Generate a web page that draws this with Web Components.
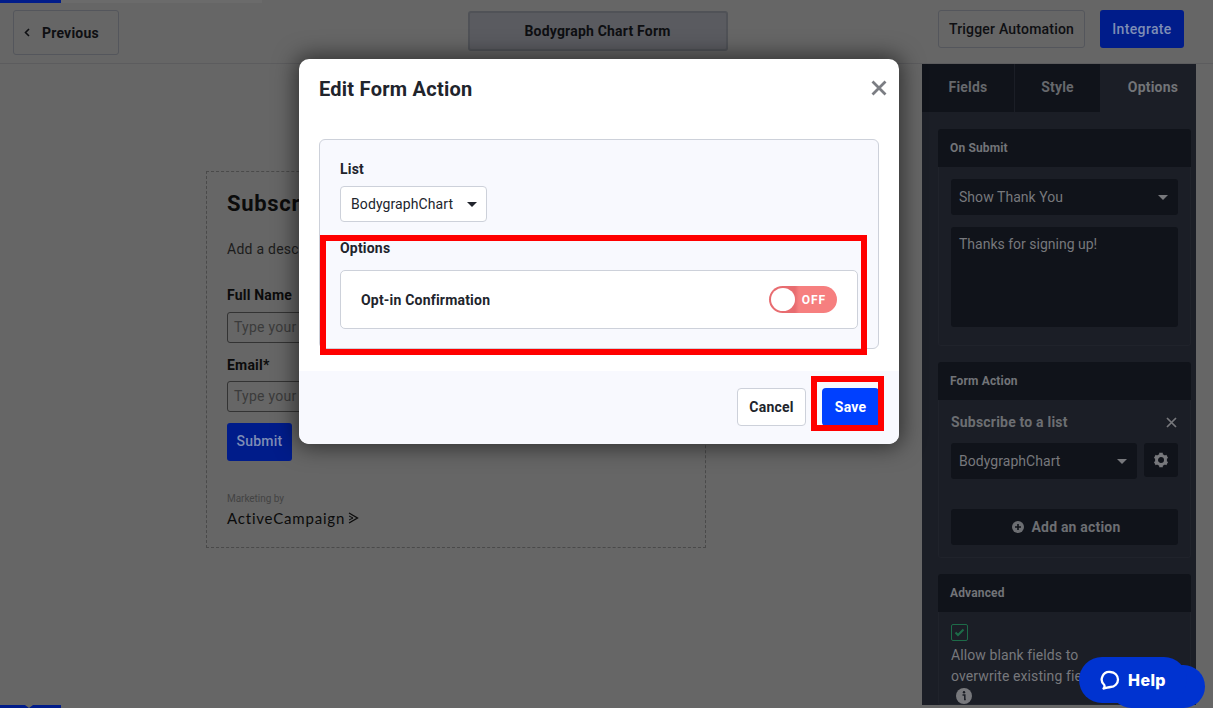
<!DOCTYPE html>
<html><head><meta charset="utf-8">
<style>
html,body{margin:0;height:100%;overflow:hidden;background:#666}
body{font-family:Roboto,"Noto Sans",sans-serif}
</style></head><body>
<app-shell></app-shell>
<script>
const F='Roboto,"Noto Sans","Liberation Sans",sans-serif';
function def(name,css,html){
  customElements.define(name,class extends HTMLElement{
    constructor(){super();const r=this.attachShadow({mode:'open'});r.innerHTML='<style>'+css+'</style>'+html;}
  });
}
const caret=c=>`<svg width="10" height="5" viewBox="0 0 10 5"><path d="M0 0h10L5 5z" fill="${c}"/></svg>`;

def('top-bar',`:host{display:grid;grid-template-columns:1fr auto 1fr;align-items:center;height:63px;border-bottom:1px solid #5c5c5e;box-sizing:content-box;padding:0 29px 0 13px;font:700 14px/20px ${F};color:#0e0f12;letter-spacing:.2px}
.l{display:flex}.r{display:flex;justify-content:flex-end;gap:15px;margin-top:-5px}
.b{display:flex;align-items:center;box-sizing:border-box;height:45px;width:106px;border:1px solid #54565c;border-radius:3px;padding-left:10px;gap:12px;margin-top:2px}
.t{width:260px;height:40px;box-sizing:border-box;border:2px solid #505257;border-radius:3px;background:#5a5b60;display:flex;align-items:center;justify-content:center;margin-left:-2px;margin-top:-2px}
.a{height:38px;box-sizing:border-box;border:1px solid #54565c;border-radius:3px;display:flex;align-items:center;justify-content:center;width:147px;font-weight:500;letter-spacing:.2px}
.i{height:38px;width:84px;box-sizing:border-box;border-radius:3px;background:#001c8a;color:#7e8db5;display:flex;align-items:center;justify-content:center;font-weight:500;letter-spacing:.35px}`,
`<div class="l"><div class="b"><svg width="6" height="9" viewBox="0 0 6 9"><path d="M5 1 1.500 4.500 5 8" fill="none" stroke="#0e0f12" stroke-width="1.600"/></svg><span>Previous</span></div></div>
<div class="t">Bodygraph Chart Form</div>
<div class="r"><div class="a">Trigger Automation</div><div class="i">Integrate</div></div>`);

def('form-preview',`:host{display:block;box-sizing:border-box;width:500px;height:377px;border:1px dashed #4a4a4a;padding:18px 20px 0;color:#0b0b0b}
h2{margin:0;font:700 22px/28px ${F};letter-spacing:.7px}
p{margin:21px 0 0;font:400 14px/20px ${F};color:#1c1c1c;letter-spacing:.25px}
label{display:block;font:700 14px/20px ${F};letter-spacing:.2px}
.f{margin-top:26px}.g{margin-top:12px}
.in{width:300px;height:31px;box-sizing:border-box;border:1px solid #333;border-radius:3px;padding-left:6px;font:400 14px/29px ${F};color:#3b3b3b;letter-spacing:.25px}
.i1{margin-top:7px}.i2{margin-top:6px}
.s{margin-top:11px;width:65px;height:38px;background:#001c8a;border-radius:3px;color:#7e8db5;font:500 14px/37px ${F};text-align:center;letter-spacing:.2px}
.m{margin-top:31px;font:400 10px/14px ${F};color:#434343;letter-spacing:-.05px}
.ac{font:400 15px/20px Lato,${F};color:#0b0b0b;margin-top:2px;display:flex;align-items:center;gap:3px;letter-spacing:.8px}`,
`<h2>Subscribe</h2><p>Add a description here.</p>
<label class="f">Full Name</label><div class="in i1">Type your name</div>
<label class="g">Email*</label><div class="in i2">Type your email</div>
<div class="s">Submit</div><div class="m">Marketing by</div>
<div class="ac"><span>ActiveCampaign</span><svg width="11" height="12" viewBox="0 0 11 12"><path d="M1 1l8.500 5L1 11" fill="none" stroke="#0b0b0b" stroke-width="1.300"/><path d="M1 4l4 2-4 2" fill="none" stroke="#0b0b0b" stroke-width="1"/></svg></div>`);

def('side-panel',`:host{display:block;border:1px solid #20232b;border-top:0;border-radius:3px;background:#1b1e26;margin-bottom:16px}
.h{height:38px;margin:0 -1px;background:#10131a;font:700 12px/38px ${F};color:#727478;padding-left:12px;border-radius:3px 3px 0 0;letter-spacing:.15px}
.c{padding:12px 12px 0}`,`<div class="h"><slot name="h"></slot></div><div class="c"><slot></slot></div>`);

def('side-select',`:host{display:flex;align-items:center;justify-content:space-between;box-sizing:border-box;height:36px;background:#10131a;border-radius:3px;padding:0 10px 0 8px;font:400 14px/20px ${F};color:#77787c;letter-spacing:.05px}`,
`<slot></slot>${caret('#77787c')}`);

def('side-bar',`:host{display:block;width:274px;height:641px;background:#1b1e26;overflow:hidden;font:400 14px/21px ${F};color:#77787c;letter-spacing:.1px}
.tabs{display:flex;height:48px;font:700 14px/46px ${F};text-align:center;color:#66686c;margin-bottom:17px;letter-spacing:.2px}
.tabs div{background:#10131a}.tabs .x{background:none;color:#727478}
.w{padding-left:16px;width:253px}
.ta{height:100px;background:#10131a;border-radius:3px;margin-top:12px;padding:0 8px;box-sizing:border-box;line-height:34px;letter-spacing:0}
.pad{height:18px}
.sub{display:flex;justify-content:space-between;align-items:center;font:700 14px/20px ${F};color:#6c6e72;height:20px;margin-bottom:11px;padding-right:1px;letter-spacing:.2px}
.row{display:flex;gap:7px;align-items:flex-start}.row side-select{flex:1}
.gear{width:34px;height:34px;background:#10131a;border-radius:3px;display:flex;align-items:center;justify-content:center}
.add{margin-top:30px;height:36px;background:#10131a;border-radius:3px;display:flex;align-items:center;justify-content:center;gap:7px;font:700 14px/20px ${F};color:#6c6e72;margin-bottom:12px;letter-spacing:.2px;padding-left:4px;box-sizing:border-box}
.chk{width:17px;height:17px;box-sizing:border-box;border:1px solid #1d6b48;border-radius:2px;display:flex;align-items:center;justify-content:center;margin-bottom:4px}
.info{margin:1px 0 0 5px;display:block}`,
`<div class="tabs"><div style="width:92px;margin-right:1px">Fields</div><div style="width:85px">Style</div><div class="x" style="width:96px;padding-left:10px;box-sizing:border-box">Options</div></div>
<div class="w">
<side-panel><span slot="h">On Submit</span><side-select>Show Thank You</side-select><div class="ta">Thanks for signing up!</div><div class="pad"></div></side-panel>
<side-panel><span slot="h">Form Action</span><div class="sub"><span>Subscribe to a list</span><svg width="11" height="11" viewBox="0 0 11 11"><path d="M1 1l9 9M10 1l-9 9" stroke="#77787c" stroke-width="1.700"/></svg></div>
<div class="row"><side-select>BodygraphChart</side-select><div class="gear"><svg width="16" height="16" viewBox="0 0 16 16"><circle cx="8" cy="8" r="4.500" fill="none" stroke="#77787c" stroke-width="3"/><g stroke="#77787c" stroke-width="3.600" stroke-linecap="butt"><path d="M8 .8v2.500M8 12.700v2.500"/><path d="M1.800 4.400l2.200 1.200M12 10.400l2.200 1.200"/><path d="M1.800 11.600l2.200-1.200M12 5.600l2.200-1.200"/></g></svg></div></div>
<div class="add"><svg width="12" height="12" viewBox="0 0 12 12"><circle cx="6" cy="6" r="6" fill="#6c6e72"/><path d="M6 3v6M3 6h6" stroke="#10131a" stroke-width="1.600"/></svg><span>Add an action</span></div></side-panel>
<side-panel><span slot="h">Advanced</span><div class="chk"><svg width="11" height="9" viewBox="0 0 11 9"><path d="M1.500 4.500 4 7l5.500-5.500" fill="none" stroke="#1d6b48" stroke-width="2"/></svg></div>
Allow blank fields to<br>overwrite existing fields<svg class="info" width="16" height="16" viewBox="0 0 16 16"><circle cx="8" cy="8" r="8" fill="#77787c"/><circle cx="8" cy="4.300" r="1.200" fill="#1b1e26"/><path d="M6.500 7h2.300v4.500h1" fill="none" stroke="#1b1e26" stroke-width="1.500"/></svg></side-panel>
</div>`);

def('toggle-off',`:host{display:flex;align-items:center;justify-content:flex-end;box-sizing:border-box;width:68px;height:27px;border-radius:14px;background:linear-gradient(90deg,#e86c70 0,#e86c70 26px,#f67f7f 30px);position:relative;padding-right:11px;font:700 12px/1 ${F};color:#fff;letter-spacing:.9px}
.k{position:absolute;left:2px;top:2px;width:24px;height:23px;border-radius:50%;background:#fff}`,`<div class="k"></div>OFF`);

def('edit-modal',`:host{position:absolute;left:299px;top:59px;width:600px;height:385px;background:#fff;border-radius:10px;box-shadow:0 0 22px 3px rgba(0,0,0,.55);display:flex;flex-direction:column;color:#21242c;overflow:visible}
.hd{height:80px;box-sizing:border-box;padding:16px 12px 0 20px;display:flex;justify-content:space-between;font:700 20px/28px ${F};letter-spacing:.25px}
.panel{margin:0 20px;height:210px;box-sizing:border-box;background:#f8f9fe;border:1px solid #cdd1da;border-radius:6px;padding:19px 20px 0;font:700 14px/20px ${F};letter-spacing:.2px}
.sel{margin-top:7px;width:147px;height:36px;box-sizing:border-box;background:#fff;border:1px solid #cdd1da;border-radius:4px;display:flex;align-items:center;justify-content:space-between;padding:0 9px 0 10px;font-weight:400;letter-spacing:.1px}
.op{margin-top:16px}
.card{margin-top:12px;height:59px;box-sizing:border-box;background:#fff;border:1px solid #cdd1da;border-radius:5px;display:flex;align-items:center;justify-content:space-between;padding:0 20px}
.ft{margin-top:22px;flex:1;background:#f8f9fe;border-radius:0 0 10px 10px;display:flex;justify-content:flex-end;align-items:flex-start;gap:16px;padding:17px 20px 0;font:700 14px/38px ${F};letter-spacing:.2px}
.cancel{width:69px;height:38px;box-sizing:border-box;background:#fff;border:1px solid #cdd1da;border-radius:4px;text-align:center;line-height:36px}
.save{width:57px;height:38px;background:#0040ff;color:#fff;border-radius:4px;text-align:center}
.r1,.r2{position:absolute;border:6px solid #f00;box-sizing:border-box}
.r1{left:21px;top:176px;width:547px;height:120px}
.r2{left:512px;top:317px;width:73px;height:55px}`,
`<div class="hd"><span>Edit Form Action</span><svg style="margin-top:5px" width="16" height="16" viewBox="0 0 16 16"><path d="M1.500 1.500l13 13M14.500 1.500l-13 13" stroke="#7b7d83" stroke-width="2.800"/></svg></div>
<div class="panel">List<div class="sel"><span>BodygraphChart</span>${caret('#21242c')}</div>
<div class="op">Options</div><div class="card"><span>Opt-in Confirmation</span><toggle-off></toggle-off></div></div>
<div class="ft"><div class="cancel">Cancel</div><div class="save">Save</div></div>
<div class="r1"></div><div class="r2"></div>`);

def('help-button',`:host{position:absolute;left:1079px;top:657px;width:108px;height:46px;border-radius:23px;background:#0033d0;color:#fff;display:flex;align-items:center;justify-content:center;gap:8px;font:800 16px/1 Inter,${F};letter-spacing:.4px}`,
`<svg width="20" height="20" viewBox="0 0 20 20"><path d="M10.500 2a7.500 7.500 0 0 1 0 15c-2 0-4.500 1.300-7 1.500 1-1 1.200-2.300.8-3.500A7.500 7.500 0 0 1 10.500 2z" fill="none" stroke="#fff" stroke-width="2.300" stroke-linejoin="round"/></svg><span>Help</span>`);

def('app-shell',`:host{display:block;position:relative;width:1213px;height:708px;overflow:hidden;background:#666}
.prog{position:absolute;left:0;top:0;height:3px;width:262px;background:#6b6b6b}
.prog i{display:block;width:61px;height:3px;background:#001c8a}
.main{display:flex;justify-content:space-between;padding-left:206px;padding-right:17px;height:641px}
form-preview{margin-top:107px}
.bb{position:absolute;left:0;bottom:0;line-height:0}
.c2{position:absolute;left:1110px;top:665px;width:95px;height:43px;border-radius:22px;background:#0033d0}`,
`<div class="prog"><i></i></div><top-bar></top-bar><div class="main"><form-preview></form-preview><side-bar></side-bar></div>
<div class="bb"><svg width="61" height="3" viewBox="0 0 61 3"><path d="M0 0h25l4 3 4-3h28v3H0z" fill="#001c8a"/></svg></div><div class="c2"></div><edit-modal></edit-modal><help-button></help-button>`);
</script></body></html>
